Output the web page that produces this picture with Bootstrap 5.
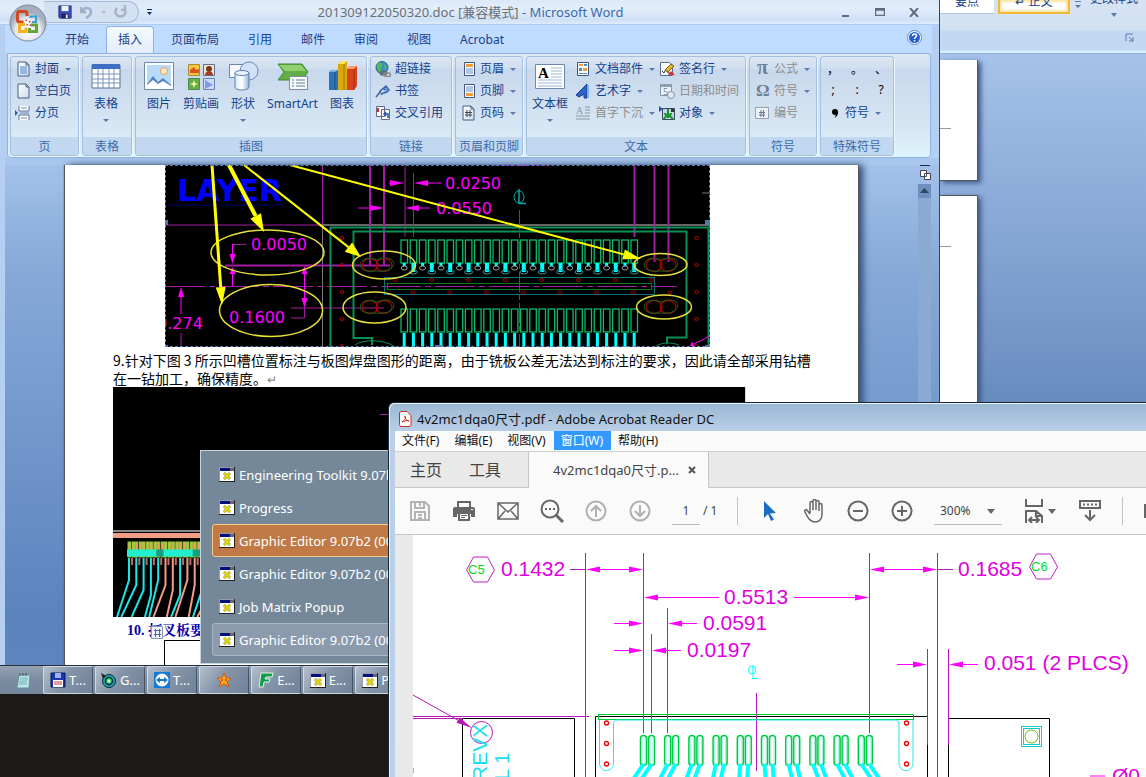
<!DOCTYPE html>
<html lang="zh-CN">
<head>
<meta charset="utf-8">
<meta name="viewport" content="width=device-width, initial-scale=1">
<title>Desktop</title>
<link href="https://cdn.jsdelivr.net/npm/bootstrap@5.3.0/dist/css/bootstrap.min.css" rel="stylesheet">
<style>
:root{--ink:#15428b;--ui:"Noto Sans","Noto Sans CJK SC",sans-serif}
html,body{height:100%}
body{font-family:var(--ui);font-size:12px;line-height:16px;color:var(--ink);background:#1b1a19;overflow:hidden}
button{font:inherit;color:inherit;background:none;border:0;padding:0;white-space:nowrap}
svg{display:block;flex:none}
.screen{position:relative;height:calc(100vh - 83px);overflow:hidden}
.pane{position:absolute;overflow:hidden}
/* rear Word window */
.rear{inset:0;background:#a8c6ee}
.rear-ribbon{margin-left:auto;width:206px;height:54px;background:linear-gradient(#d5e3f3,#d2e1f2 30px,#c1d8f0 31px,#c1d8f0 50px,#d8f0fb 51px);border-bottom:1px solid #8db2e3}
.gal{height:14px;border-bottom:1px solid #a9c4e4;background:#fff;width:54px;line-height:10px;overflow:hidden}
.gal span{display:block;margin-top:-9px}
.gal.on{border:2px solid #f0b93c;border-top:0;width:72px;box-shadow:inset 0 0 2px 2px #fbe6a4}
.restyle{margin-top:-9px}
.rear-doc{margin-left:auto;width:206px;height:calc(100% - 54px);padding-top:6px;background:linear-gradient(#a6c2ea,#6286bb 60%,#6286bb)}
.rear-page{width:38px;height:121px;background:#fff;border:1px solid #555;border-left:0;border-top:0;box-shadow:3px 2px 5px #3c5785;margin-bottom:14px;padding-top:68px}
.rear-page + .rear-page{height:600px;padding-top:50px;border-top:1px solid #555}
.rear-page i{display:block;width:11px;height:1px;background:#999}
/* front Word window */
.front{left:0;top:0;bottom:0;right:206px;background:#b4cff2;border-right:1px solid #29466f}
.cap{height:25px;background:linear-gradient(#dce8f8,#e3eefb 8px,#cfe0f6 20px,#dfebfa);border-bottom:1px solid #b0cbee}
.orb{position:absolute;left:9px;top:4px;z-index:2}
.qat{margin-left:44px;width:95px;height:22px;border-radius:0 11px 11px 0;border:1px solid #a5bddb;border-left:0;background:#d3e1f3;padding-left:14px}
.wtitle{font-size:13px;color:#6a7078;padding-right:52px}
.wtitle span{color:#3e6aaa}
.wtabs{height:28px;margin:0 7px 0 5px;background:#bfdbff;padding:1px 10px 0 46px;gap:1px}
.wtabs button{padding:0 13px;height:27px;border:1px solid transparent;border-bottom:0;border-radius:4px 4px 0 0}
.wtabs button.on{background:linear-gradient(#f5faff,#e3edf9);border-color:#8db2e3;padding:0 11px;margin:0 2px}
.rb{height:105px;margin:0 8px 0 7px;padding:2px 2px 0;gap:3px;border:1px solid #8db2e3;border-radius:0 4px 4px 4px;background:linear-gradient(#dfe9f5,#d0deef 14px,#c8d8ec 16px,#d9e8f5 80px,#dff5fd)}
.grp{height:100px;border:1px solid #a5c0de;border-radius:3px;box-shadow:1px 1px 0 #eef6fd;overflow:hidden;flex:none}
.grp>.body{height:80px;padding-top:1px}
.grp>.lab{height:19px;line-height:19px;background:#c1d8f0;color:#3e6aaa;text-align:center;font-size:12px}
.tight{padding-left:2px}
.it{height:22px;display:flex;align-items:center;gap:4px}
.it svg.ic{width:16px;height:16px}
.dim{color:#8d8d8d}
.dim svg{opacity:.6}
.dd::after{content:"";border:3px solid transparent;border-top-color:#5a7bab;border-bottom:0;margin-left:2px}
.big{display:flex;flex-direction:column;align-items:center;width:42px;padding-top:2px;height:78px}
.big svg{width:32px;height:32px;margin-bottom:4px}
.big.dd::after{margin:7px 0 0}
.puncts{color:#000;font-size:12px;display:grid;grid-template-columns:24px 24px 24px}
.puncts span{height:20px;text-align:center}
.docs{height:calc(100% - 158px);background:linear-gradient(#a3c1ea,#86a9d8 20%,#5b83bd 85%,#5f86c0);margin:0 0 0 5px;border-top:7px solid #a9c6ec}
.sheet{background:#fff;margin-left:60px;width:794px;border-right:1px solid #555;box-shadow:4px 0 7px #2f4b78,-1px 0 1px #555;height:100%;overflow:hidden;color:#000;flex:none}
.sheet p{font-family:"Noto Sans CJK SC",sans-serif;font-size:14px;line-height:18px;margin:0 0 0 48px;white-space:nowrap;font-weight:400}
.sheet .para{padding-top:4px;height:40px}
.para small{color:#888}
.pic1{margin-left:100px;width:545px;outline:1px dashed #5b7fb8;outline-offset:-1px}
.pic2{margin-left:48px}
.sheet .num{position:relative;font-family:"Liberation Serif","Noto Serif CJK SC","Noto Sans CJK SC",serif;font-weight:700;color:#00a;margin:5px 0 0 62px;height:18px}
.num svg{position:absolute;left:24px;top:4px}
.cell{border:1px solid #000;margin-left:99px;width:600px;height:60px}
.knob{position:relative;margin-bottom:-19px}
.bar{width:13px;background:#8aaad4;margin:19px 0 0;border-top:14px solid #6f8fbe}
.bar svg{margin:-10px auto 0}
/* taskbar and popup list */
.tb{position:absolute;left:0;right:0;bottom:0;height:29px;background:linear-gradient(#93a2b4,#7b8ca1 50%,#74869c);border-top:1px solid #26303c;color:#fff;padding-left:43px;gap:2px}
.tb button{width:50px;height:28px;border:1px solid #cfd8e2;border-right-color:#46566b;border-radius:2px;background:linear-gradient(125deg,#b4bfcc,#8494a8 45%,#71839a);display:flex;align-items:center;justify-content:center;gap:3px;font-size:13px;flex:none}
.tb .pad{position:absolute;left:16px;top:7px}
.pop{left:200px;bottom:30px;width:210px;height:214px;background:#748899;border:1px solid #c9d3dc;padding:7px 0 0 11px;color:#fff}
.pop button{display:flex;width:220px;height:33px;align-items:center;gap:4px;padding-left:6px;font-size:13px;border:1px solid transparent;border-radius:3px}
.pop .hot{background:#c17a45;border-color:#f3c98a}
.pop .cur{background:#8b9bad;border-color:#a9b6c4}
/* Reader window */
.rd{left:388px;top:402px;right:0;bottom:0;background:linear-gradient(#9ab7d3,#b9cfe8 28px,#b9d1ea);border:1px solid #1d2731;border-right:0;border-bottom:0;border-radius:6px 0 0 0;box-shadow:inset 1px 1px 0 #e9f2fb;padding-left:6px;color:#111}
.rd-cap{height:28px;padding:4px 0 0 4px;gap:5px;font-size:13px;color:#111}
.rd-menu{height:20px;background:#fafafa}
.rd-menu button{padding:0 8px 0 7px;height:19px;font-size:12px}
.rd-menu .on{background:#3399ff;color:#fff}
.rd-tabs{height:37px;background:#e9e9e9;border-top:1px solid #d0d0d0;border-bottom:1px solid #c6c6c6;color:#444}
.rd-tabs>button{font-size:16px;padding:0 12px 0 15px;height:35px}
.rd-tabs .doc{font-size:13px;width:181px;height:36px;margin-left:15px;background:#fafafa;border:1px solid #c6c6c6;border-width:0 1px;padding:0 8px 0 24px;display:flex;align-items:center;gap:9px}
.rd-tools{height:47px;background:#fafafa;border-bottom:1px solid #c6c6c6;padding-left:3px;color:#444}
.rd-tools button{width:44px;height:40px;display:grid;place-items:center;flex:none}
.rd-tools .wide{width:56px;display:flex;align-items:center;justify-content:center;gap:5px}
.rd-tools input,.rd-tools select{font:12px/16px var(--ui);color:#444;border:0;border-bottom:1px solid #bbb;background:none;height:27px;border-radius:0;padding:0;flex:none;appearance:none}
.rd-tools input{width:28px;margin:0 3px 0 10px;text-align:center}
.rd-tools select{width:68px;padding-left:6px}
.total{width:18px;flex:none;white-space:nowrap}
.sel{position:relative;margin:0 10px;flex:none}
.sel::after,.tri::after{content:"";border:4px solid transparent;border-top:5px solid #666;border-bottom:0}
.sel::after{position:absolute;right:7px;top:11px}
.rule{width:1px;height:28px;background:#c4c4c4;flex:none;margin:0 10px 0 16px}
.rule.last{margin:0 21px 0 10px}
.canvas{height:calc(100% - 132px);background:#fff;border-left:18px solid #e9e9e9;overflow:hidden}
.mono text{font-family:"Liberation Sans",sans-serif}
</style>
</head>
<body>
<svg width="0" height="0" class="position-absolute">
 <defs>
 <linearGradient id="gp" x1="0" y1="0" x2="1" y2="1"><stop offset="0" stop-color="#fff"/><stop offset="1" stop-color="#c9ddf2"/></linearGradient>
 <linearGradient id="gc"><stop offset="0" stop-color="#d9eafc"/><stop offset=".5" stop-color="#fff"/><stop offset="1" stop-color="#8fb2dd"/></linearGradient>
 <symbol id="page" viewBox="0 0 16 16"><path d="M3 1h8l3 3v11H3z" fill="url(#gp)" stroke="#4a5f80"/><path d="M11 1v3h3" fill="none" stroke="#4a5f80"/></symbol>
 <symbol id="xw" viewBox="0 0 16 15"><path fill="#fff" d="M0 0h16v15H0z"/><path d="M0 .5h16M.5 0v15" stroke="#99a"/><path d="M0 14.500h16M15.500 0v15" stroke="#222"/><path fill="#00107c" d="M1 1h10v3H1z"/><path fill="#667" d="M11 1h4v3h-4z"/><path d="M5 6l6 6M11 6l-6 6" stroke="#665" stroke-width="2.500"/><path d="M5 6l6 6M11 6l-6 6" stroke="#e6dc00" stroke-width="1.800"/></symbol>
 <symbol id="floppy" viewBox="0 0 16 16"><path d="M1 1h14v14H2l-1-1z" fill="#3a4fb5" stroke="#1c2a7c"/><path d="M4 1h8v6H4z" fill="#eef3fb"/><path d="M4 10h8v5H4z" fill="#1a2460"/><path d="M9 11h2v4H9z" fill="#fff"/></symbol>
 </defs>
</svg>

<main class="screen">
 <section class="pane rear" aria-label="Word">
  <div class="rear-ribbon d-flex align-items-start">
   <button class="gal me-1"><span>要点</span></button>
   <button class="gal on"><span>↵ 正文</span></button>
   <button class="border-start border-end px-1"><svg width="6" height="13"><path d="M0 1h6v1H0zM0 5h6l-3 3z" fill="#5a7bab"/></svg></button>
   <div class="ms-1"><button class="d-block restyle">更改样式</button><svg class="mx-auto" width="6" height="10"><path d="M0 6h6l-3 4z" fill="#5a7bab"/></svg>
   <svg class="ms-auto mt-3 me-1" width="9" height="9"><path d="M1 8V1h7M4 4l4 4M8 4v4H4" fill="none" stroke="#5a7bab"/></svg></div>
  </div>
  <div class="rear-doc"><div class="rear-page"><i></i></div><div class="rear-page"><i></i></div></div>
 </section>

 <section class="pane front">
  <button class="orb" aria-label="Office"><svg width="38" height="38" viewBox="0 0 38 38"><defs><radialGradient id="orb" cy=".7"><stop offset="0" stop-color="#fff"/><stop offset=".7" stop-color="#e2e6ee"/><stop offset="1" stop-color="#a3aebe"/></radialGradient></defs><circle cx="19" cy="19" r="18" fill="url(#orb)" stroke="#7b8899"/><g fill="none"><path d="M18 12V9.500a2 2 0 0 0-2-2H10.500a2 2 0 0 0-2 2V16a2 2 0 0 0 2 2h4" stroke="#d1481c" stroke-width="3"/><path d="M21.500 14v-1.500h5.500v5.500h-4" stroke="#3d9fd8" stroke-width="2.200"/><path d="M16 20.500h-5.500v7H17v-4" stroke="#f3b11b" stroke-width="3"/><path d="M20.500 24v3.500h7V21H22" stroke="#66a33a" stroke-width="3"/></g><path d="M16.500 15.500h1.500v1.500h-1.500zM20 17h1.500v1.500H20zM17.500 20H19v1.500h-1.500zM20.500 20.500H22V22h-1.500z" fill="#c0502c"/></svg></button>
  <header class="cap d-flex align-items-center">
   <div class="qat d-flex align-items-center gap-2">
    <button aria-label="保存"><svg width="14" height="14"><use href="#floppy"/></svg></button>
    <button class="d-flex align-items-center gap-2" aria-label="撤消"><svg width="13" height="14"><path d="M1 2v5h5M2 6c3-4 9-4 9 1 0 3-3 5-5 6" fill="none" stroke="#9fb0cc" stroke-width="2.500"/></svg><svg width="5" height="3"><path d="M0 0h5l-2 3z" fill="#b3bccb"/></svg></button>
    <button aria-label="恢复"><svg width="13" height="14"><path d="M3 3a5 5 0 1 0 7 0M11 0v5H7" fill="none" stroke="#a8b4c8" stroke-width="2.500"/></svg></button>
   </div>
   <svg class="ms-2" width="5" height="7"><path d="M0 0h5v1H0zM0 3h5L2.500 6z" fill="#15305f"/></svg>
   <div class="wtitle flex-grow-1 text-center">201309122050320.doc [兼容模式] <span>- Microsoft Word</span></div>
   <div class="d-flex gap-4 align-items-center me-3 pe-1">
    <button aria-label="最小化"><svg width="10" height="10"><path d="M1 8h7v2H1z" fill="#5e6d82"/></svg></button>
    <button aria-label="最大化"><svg width="10" height="8"><path d="M.5.5h9v7h-9zM0 2h10" fill="none" stroke="#5e6d82" stroke-width="1.500"/></svg></button>
    <button aria-label="关闭"><svg width="10" height="9"><path d="M1 0l8 9M9 0L1 9" stroke="#5e6d82" stroke-width="2"/></svg></button>
   </div>
  </header>
  <nav class="wtabs d-flex">
   <button>开始</button><button class="on">插入</button><button>页面布局</button><button>引用</button><button>邮件</button><button>审阅</button><button>视图</button><button>Acrobat</button>
   <svg class="ms-auto mt-1" width="15" height="15"><circle cx="7.500" cy="7.500" r="7" fill="#fff" stroke="#5a82c4"/><circle cx="7.500" cy="7.500" r="5.500" fill="#2360cf"/><path d="M5.500 6c0-3 4-2.500 4-.5S7.500 7 7.500 9M7.500 10v1.500" fill="none" stroke="#fff" stroke-width="1.500"/></svg>
  </nav>
  <div class="rb d-flex">
   <div class="grp" style="width:69px"><div class="body ps-1">
    <button class="it dd"><svg class="ic"><use href="#page"/><path d="M5 6h7M5 8h7M5 10h7M5 12h7" stroke="#4d86c6"/></svg>封面</button>
    <button class="it"><svg class="ic"><use href="#page"/></svg>空白页</button>
    <button class="it"><svg class="ic"><path d="M4 1v5h10V1M4 15v-5h10v5" fill="#fff" stroke="#56708f"/><path d="M6 3h6M6 13h6M5 8h9" stroke="#6689b5"/><path d="M0 5l3 3-3 3z" fill="#2c5ea8"/></svg>分页</button></div><div class="lab">页</div></div>
   <div class="grp" style="width:50px"><div class="body tight"><button class="big dd"><svg viewBox="0 0 32 32"><path fill="#fff" stroke="#57739c" d="M2 5h28v23H2z"/><path fill="#3f6fc4" d="M2 4h28v5H2z"/><path d="M2 14h28M2 19h28M2 23h28M8 9v19M13 9v19M19 9v19M24 9v19" stroke="#7b95b8"/></svg>表格</button></div><div class="lab">表格</div></div>
   <div class="grp" style="width:232px"><div class="body d-flex tight">
    <button class="big"><svg viewBox="0 0 32 32"><path d="M1.500 2.500h29v27h-29z" fill="#fff" stroke="#6d88ae"/><path d="M4 5h24v22H4z" fill="#b8dcf8"/><circle cx="21" cy="11" r="3.500" fill="#fde9c8" stroke="#f19a4a"/><path d="M4 24l6-8 5 6 5-4 8 7v2H4z" fill="#5585c0"/><path d="M4 25l6-5 5 4 5-3 8 5v1H4z" fill="#fff"/></svg>图片</button>
    <button class="big"><svg viewBox="0 0 32 32"><path d="M3.500 4.500h11v11h-11z" fill="#f8c838" stroke="#a98a3a"/><path d="M5 10l4-3 2 3 3-1v4H5z" fill="#d9541e"/><path d="M18.500 4.500h11v11h-11z" fill="#ece5d8" stroke="#63708a"/><circle cx="24" cy="9" r="3" fill="#7a3b18"/><path d="M20 15c0-5 8-5 8 0z" fill="#b03822"/><path d="M3.500 18.500h11v11h-11z" fill="#66b04a" stroke="#4d8a4a"/><path d="M9 20l1 3 3 1-3 1-1 3-1-3-3-1 3-1z" fill="#fff6a0"/><path d="M18.500 18.500h11v11h-11z" fill="#cdd9f8" stroke="#6a83b8"/><path d="M20 20l8 5-8 4z" fill="#7e9be4"/></svg>剪贴画</button>
    <button class="big dd"><svg viewBox="0 0 32 32"><path d="M2.500 4.500h14v13h-14z" fill="#f5f9fe" stroke="#6a87b2"/><circle cx="22" cy="11" r="9" fill="#cfe2f7" stroke="#6a87b2"/><path d="M8 13v14c0 4 14 4 14 0V13z" fill="url(#gc)" stroke="#5f80b0"/><ellipse cx="15" cy="13" rx="7" ry="2.500" fill="#e9f3fe" stroke="#5f80b0"/></svg>形状</button>
    <button class="big" style="width:57px"><svg viewBox="0 0 32 32"><path d="M1 4h24l6 8-6 8H1l6-8z" fill="#62ad45" stroke="#3f8636"/><path d="M2 5h22l5 6H8z" fill="#92cf70"/><path d="M12.500 16.500h18v13h-18z" fill="#f7fafd" stroke="#7b8ca4"/><path d="M15 20h2M15 23h2M15 26h2M19 20h9M19 23h9M19 26h9" stroke="#65788f"/></svg>SmartArt</button>
    <button class="big"><svg viewBox="0 0 32 32"><path d="M3 12l3-2h6v20H3z" fill="#2c72b8"/><path d="M3 12l3-2h6l-3 2z" fill="#76b3e6"/><path d="M12 4l3-3h6v29h-9z" fill="#dba90c"/><path d="M12 4l3-3h6l-3 3z" fill="#ffe65c"/><path d="M21 9l3-3h7v20l-3 4h-7z" fill="#d9421c"/><path d="M21 9l3-3h7l-3 3z" fill="#ff9a70"/><path d="M9 12v18M18 4v26M28 9v21" stroke="#000" stroke-opacity=".3"/></svg>图表</button></div><div class="lab">插图</div></div>
   <div class="grp" style="width:82px"><div class="body ps-1">
    <button class="it"><svg class="ic"><circle cx="7" cy="6.500" r="6" fill="#3b8dcc" stroke="#2c6189"/><path d="M3 2c5-1 5 2 3 5s3 3 0 5c-3-1-6-6-3-10zM9 3l3 3-2 3z" fill="#55b858"/><rect x="5.500" y="10.500" width="6" height="3.500" rx="1.800" fill="none" stroke="#666" stroke-width="1.500"/><rect x="9.500" y="12" width="6" height="3.500" rx="1.800" fill="none" stroke="#888" stroke-width="1.500"/></svg>超链接</button>
    <button class="it"><svg class="ic"><path d="M1 14l5-6M4 11c1-5 4-6 7-4M6 12c2-4 4 0 8-5l-3-4-6 5" fill="#8fb1e2" stroke="#3d64a8" stroke-width="1.500"/></svg>书签</button>
    <button class="it"><svg class="ic"><path d="M1.500 1.500h8v10h-8zM6.500 4.500h8v10h-8z" fill="#fff" stroke="#5a6d8c"/><path d="M3 3v4" stroke="#c33" stroke-width="2"/><path d="M13 13V9H9m2-2L9 9l2 2" fill="none" stroke="#2456b0" stroke-width="1.500"/></svg>交叉引用</button></div><div class="lab">链接</div></div>
   <div class="grp" style="width:68px"><div class="body ps-1">
    <button class="it dd"><svg class="ic"><path d="M4.500 1.500h10v13h-10z" fill="#fff" stroke="#3c5680"/><path fill="#f19b38" d="M6 3h7v3H6z"/><path d="M6 8h7M6 10h7M6 12h7" stroke="#6a8cc0"/></svg>页眉</button>
    <button class="it dd"><svg class="ic"><path d="M4.500 1.500h10v13h-10z" fill="#fff" stroke="#3c5680"/><path fill="#f19b38" d="M6 10h7v3H6z"/><path d="M6 4h7M6 6h7M6 8h7" stroke="#6a8cc0"/></svg>页脚</button>
    <button class="it dd"><svg class="ic"><use href="#page"/><path d="M7 5v7M10 5v7M5 7.500h7M5 10h7" stroke="#445" /></svg>页码</button></div><div class="lab">页眉和页脚</div></div>
   <div class="grp" style="width:220px"><div class="body d-flex tight">
    <button class="big dd"><svg viewBox="0 0 32 32"><path d="M1.500 4.500h29v24h-29z" fill="#fff" stroke="#6d88ae"/><path d="M17 8h11M17 11h11M17 14h11M17 17h11M4 20h24M4 23h24M4 26h24" stroke="#9cb7dc"/><text x="4" y="18" font-size="15" font-weight="700" font-family="Liberation Serif,serif" fill="#000">A</text></svg>文本框</button>
    <div class="ps-1">
    <button class="it dd"><svg class="ic"><path d="M2.500 1.500h11v13h-11z" fill="#fff" stroke="#3c5680"/><path fill="#f19b38" d="M4 3h4v2H4zM8 7h4v3H8z"/><path fill="#4b85cc" d="M9 3h3v2H9zM4 7h3v3H4zM4 12h8v1H4z"/></svg>文档部件</button>
    <button class="it dd"><svg class="ic"><path d="M1 12L12 1v14H9v-4l-5 3z" fill="#2b65c8" stroke="#163f8c"/><path d="M12 1l2 1v13h-2" fill="#7fb0ee"/></svg>艺术字</button>
    <button class="it dd dim"><svg class="ic"><text x="1" y="9" font-size="10" font-family="Liberation Serif,serif" fill="#567">A</text><path d="M10 2h5M10 5h5M10 8h5M1 11h14M1 14h14" stroke="#567"/></svg>首字下沉</button></div>
    <div class="ps-1">
    <button class="it dd"><svg class="ic"><path d="M1.500 1.500h9l3 3v10h-12z" fill="#fff" stroke="#5a6d8c"/><path d="M3 10l2 2 2-4 2 4h5" fill="none" stroke="#334"/><path d="M6 9l6-6 3 2-6 6z" fill="#e9b62c" stroke="#7c5a18"/><path d="M12 10l4 4h-7z" fill="#d03a2a"/></svg>签名行</button>
    <button class="it dim"><svg class="ic"><path d="M1.500 1.500h11v11h-11z" fill="#fff" stroke="#567"/><path fill="#678" d="M1 1h12v3H1z"/><text x="4" y="12" font-size="9" fill="#456">5</text><circle cx="12" cy="12" r="3.500" fill="#eef" stroke="#567"/></svg>日期和时间</button>
    <button class="it dd"><svg class="ic"><path fill="#c9d4e2" stroke="#3a4660" d="M3.500 3.500h12v11h-12z"/><path d="M9 4v9M6 8c0 3 6 3 6 0M5 14c2-4 6-4 9 0" stroke="#18942c" stroke-width="2" fill="none"/><path d="M0 1l4 3-4 3z" fill="#2450b8"/><path fill="#333" d="M12 4h3v3h-3z"/></svg>对象</button></div>
   </div><div class="lab">文本</div></div>
   <div class="grp" style="width:68px"><div class="body ps-1 dim">
    <button class="it dd"><svg class="ic"><text x="3" y="13" font-size="20" font-weight="700" fill="#345" font-family="Liberation Serif,serif">π</text></svg>公式</button>
    <button class="it dd"><svg class="ic"><text x="2" y="13" font-size="17" font-weight="700" fill="#345" font-family="Liberation Serif,serif">Ω</text></svg>符号</button>
    <button class="it"><svg class="ic"><path d="M1.500 2.500h13v11h-13z" fill="#fff" stroke="#678"/><path d="M7 5v7M9.500 5v7M5 7.500h6M5 10h6" stroke="#234"/></svg>编号</button></div><div class="lab">符号</div></div>
   <div class="grp" style="width:74px"><div class="body">
    <div class="puncts pt-1"><span>，</span><span>。</span><span>、</span><span>;</span><span>:</span><span>?</span></div>
    <button class="it dd ps-1"><svg class="ic"><circle cx="10" cy="7" r="3" fill="#000"/><path d="M13 7c0 3-1 5-4 6 2-2 2-3 1-4z"/></svg>符号</button></div><div class="lab">特殊符号</div></div>
  </div>
  <div class="docs d-flex">
   <article class="sheet">
    <svg id="board" class="pic1" height="182" viewBox="165 165 545 182"></svg>
    <p class="para">9.针对下图 3 所示凹槽位置标注与板图焊盘图形的距离，由于铣板公差无法达到标注的要求，因此请全部采用钻槽<br>在一钻加工，确保精度。<small>↵</small></p>
    <svg id="traces" class="pic2" width="633" height="230" viewBox="113 387 633 230"></svg>
    <p class="num">10. 打叉板要求<svg width="12" height="13"><path d="M.5.5h11v12H.5z" fill="#eef3fb" stroke="#8a9ab5"/><path d="M3 4.500h7M3 8.500h7M4.500 3v8M8.500 3v8" stroke="#4a68a8"/></svg></p>
    <div class="cell"></div>
   </article>
   <div class="ms-auto me-2 d-flex flex-column align-items-center"><svg class="knob" width="12" height="19"><path d="M1 0h10v1H1z" fill="#1c2b45"/><path d="M1.500 5.500h6v6h-6zM5.500 8.500h6v6h-6z" fill="#fff" stroke="#445"/></svg><div class="bar flex-grow-1"><svg width="9" height="5"><path d="M4.500 0L9 5H0z" fill="#2f4668"/></svg></div></div>
  </div>
 </section>

 <nav class="tb d-flex" aria-label="Taskbar">
  <svg class="pad" width="16" height="16"><path d="M3 2h11l-1 13H1z" fill="#bfe6ea" stroke="#5b97a4"/><path d="M4 5h8M4 7h8M3 9h8M3 11h8" stroke="#6fb3bd"/><path d="M4 0v3M7 0v3M10 0v3" stroke="#555"/></svg>
  <button><svg width="16" height="16"><path d="M1 1h14v14H1z" fill="#1736b0" stroke="#06185c"/><path d="M5 1h6v5H5z" fill="#9fb3f0"/><path d="M3 8h10v7H3z" fill="#fff"/><path d="M4 10h8M4 12h8" stroke="#c33"/></svg>T...</button>
  <button><svg width="17" height="16"><circle cx="9" cy="9" r="6.500" fill="#18a89c" stroke="#124"/><circle cx="9" cy="9" r="3.500" fill="#2ee060" stroke="#025" stroke-width="1.500"/><circle cx="9" cy="9" r="1.300" fill="#fff"/><path d="M1 1l5 3-3 3z" fill="#222"/></svg>G...</button>
  <button><svg width="16" height="16"><path fill="#1478d4" d="M0 0h16v16H0z"/><circle cx="8" cy="8" r="6.500" fill="#fff"/><path d="M2 8l4-3v2h4V5l4 3-4 3V9H6v2z" fill="#1478d4"/></svg>T...</button>
  <button aria-label="Star"><svg width="16" height="16"><path d="M8 1l2 5 5 0-4 4 2 5-5-3-5 3 2-5-4-4 5 0z" fill="#ffa51e" stroke="#d9541a"/><path d="M6 7v2M10 7v2" stroke="#722"/></svg></button>
  <button><svg width="17" height="16"><path d="M4 1h12l-1 4H9l-1 2h5l-1 3H7l-1 5H2z" fill="#15994a" stroke="#e2f5e8"/></svg>E...</button>
  <button><svg width="16" height="15"><use href="#xw"/></svg>E...</button>
  <button><svg width="16" height="15"><use href="#xw"/></svg>P...</button>
 </nav>

 <div class="pane pop">
  <button><svg width="16" height="15"><use href="#xw"/></svg>Engineering Toolkit 9.07b2</button>
  <button><svg width="16" height="15"><use href="#xw"/></svg>Progress</button>
  <button class="hot"><svg width="16" height="15"><use href="#xw"/></svg>Graphic Editor 9.07b2 (00</button>
  <button><svg width="16" height="15"><use href="#xw"/></svg>Graphic Editor 9.07b2 (00</button>
  <button><svg width="16" height="15"><use href="#xw"/></svg>Job Matrix Popup</button>
  <button class="cur"><svg width="16" height="15"><use href="#xw"/></svg>Graphic Editor 9.07b2 (00</button>
 </div>
</main>

<section class="pane rd">
 <header class="rd-cap d-flex align-items-center"><svg width="13" height="16"><path d="M2 .5h6l4 4v9a2 2 0 0 1-2 2H2a2 2 0 0 1-1.500-2V2A2 2 0 0 1 2 .5z" fill="#fff" stroke="#d42a26"/><path d="M3 11c4-2 4-6 3-6s0 4 4 5c-2-1-5 0-7 1z" fill="none" stroke="#d42a26"/></svg>4v2mc1dqa0尺寸.pdf - Adobe Acrobat Reader DC</header>
 <nav class="rd-menu d-flex"><button>文件(F)</button><button>编辑(E)</button><button>视图(V)</button><button class="on">窗口(W)</button><button>帮助(H)</button></nav>
 <nav class="rd-tabs d-flex"><button>主页</button><button>工具</button><button class="doc">4v2mc1dqa0尺寸.p...<svg width="8" height="8" aria-label="关闭"><path d="M1 1l6 6M7 1L1 7" stroke="#555" stroke-width="2"/></svg></button></nav>
 <div class="rd-tools d-flex align-items-center">
  <button aria-label="保存"><svg width="20" height="20" fill="none" stroke="#b3b3b3" stroke-width="2"><path d="M1 1h14l4 4v14H1zM5 19v-8h10v8M5 1v6h9V1M8 14h4M8 17h4M10 2v3"/></svg></button>
  <button aria-label="打印"><svg width="22" height="20" fill="#666"><path d="M4 0h14v6H4zM2 6h18a2 2 0 0 1 2 2v8h-4v-3H4v3H0V8a2 2 0 0 1 2-2zM5 13h12v7H5z"/><path fill="#fff" d="M6 2h10v4H6zM7 13h8v5H7zM18 8h2v1h-2z"/><path d="M8 14h6v1H8zM8 16h4v1H8z"/></svg></button>
  <button aria-label="邮件"><svg width="22" height="18" fill="none" stroke="#666" stroke-width="1.500"><path d="M1 1h20v16H1zM1 1l10 9L21 1M1 17l7-8M21 17l-7-8"/></svg></button>
  <button aria-label="查找"><svg width="24" height="24" fill="none" stroke="#666" stroke-width="2"><circle cx="10" cy="10" r="8.500"/><path d="M16 16l7 7" stroke-width="3"/><path d="M5 10h2M9 10h2M13 10h2" /></svg></button>
  <button aria-label="上一页"><svg width="22" height="22" fill="none" stroke="#b0b0b0" stroke-width="2"><circle cx="11" cy="11" r="9.500"/><path d="M11 17V6M6 11l5-5 5 5"/></svg></button>
  <button aria-label="下一页"><svg width="22" height="22" fill="none" stroke="#b0b0b0" stroke-width="2"><circle cx="11" cy="11" r="9.500"/><path d="M11 5v11M6 11l5 5 5-5"/></svg></button>
  <input aria-label="页码" value="1"><span class="total">/ 1</span>
  <span class="rule"></span>
  <button aria-label="选择"><svg width="14" height="20"><path d="M1 0l12 12-6 .5 4 6-3 1.500-3-7-4 4z" fill="#1b6ec2"/></svg></button>
  <button aria-label="抓手"><svg width="22" height="24" fill="none" stroke="#666" stroke-width="1.500"><path d="M7 14V4c0-2 3-2 3 0v7V2c0-2 3-2 3 0v9V3c0-2 3-2 3 0v9V6c0-2 3-2 3 0v9c0 5-3 8-7 8-5 0-7-4-10-10-1-2 1-3 2-2l3 4"/></svg></button>
  <button aria-label="缩小"><svg width="22" height="22" fill="none" stroke="#666" stroke-width="2"><circle cx="11" cy="11" r="9.500"/><path d="M6 11h10"/></svg></button>
  <button aria-label="放大"><svg width="22" height="22" fill="none" stroke="#666" stroke-width="2"><circle cx="11" cy="11" r="9.500"/><path d="M6 11h10M11 6v10"/></svg></button>
  <span class="sel"><select aria-label="缩放"><option>300%</option></select></span>
  <button class="wide tri" aria-label="适合宽度"><svg width="18" height="24" fill="none" stroke="#666" stroke-width="2"><path d="M1 0v7h16V0M1 24V12h10l6 5v7M11 12v5h6M4 21h10M7 18l-3 3 3 3M11 18l3 3-3 3"/></svg></button>
  <button aria-label="工具栏"><svg width="22" height="22" fill="none" stroke="#666" stroke-width="2"><path d="M1 1h20v7H1zM4 4.500h2M8 4.500h2M12 4.500h2M16 4.500h2M11 10v10M6 15l5 5 5-5"/></svg></button>
  <span class="rule last"></span><svg width="8" height="14"><path d="M1 1h6v12H1z" fill="none" stroke="#666" stroke-width="2"/></svg>
 </div>
 <div class="canvas"><svg id="pdf" class="mono" width="733" height="242" viewBox="413 535 733 242"></svg></div>
</section>

<script src="https://cdn.jsdelivr.net/npm/bootstrap@5.3.0/dist/js/bootstrap.bundle.min.js"></script>
<script>
// Small helpers that return SVG markup for the CAD drawings.
const L=(x1,y1,x2,y2,c,w=1,x='')=>`<path d="M${x1} ${y1}L${x2} ${y2}" stroke="${c}" stroke-width="${w}" fill="none" ${x}/>`;
const R=(x,y,w,h,c,sw=1,f='none',rx=0)=>`<rect x="${x}" y="${y}" width="${w}" height="${h}" stroke="${c}" stroke-width="${sw}" fill="${f}" rx="${rx}"/>`;
const E=(x,y,rx,ry,c,w=1)=>`<ellipse cx="${x}" cy="${y}" rx="${rx}" ry="${ry}" stroke="${c}" stroke-width="${w}" fill="none"/>`;
const T=(x,y,s,t,c,x2='')=>`<text x="${x}" y="${y}" font-size="${s}" fill="${c}" ${x2}>${t}</text>`;
// Line that ends in a filled arrow head at (x2,y2).
function A(x1,y1,x2,y2,c,w=1,len=14,half=3){
  const d=Math.hypot(x2-x1,y2-y1),u=(x2-x1)/d,v=(y2-y1)/d,bx=x2-u*len,by=y2-v*len;
  return L(x1,y1,bx,by,c,w)+`<path d="M${x2} ${y2}L${bx-v*half} ${by+u*half}L${bx+v*half} ${by-u*half}z" fill="${c}"/>`;
}
// Board picture
(function(){
  const m='#a21ca2',M='#f0f',g='#0c8f55',y='#e6e03a',Y='#ff0';let s=R(165,165,545,182,'none',0,'#000');
  const D='font-family="DejaVu Sans"';
  s+=T(282,201,30,'LAYER','#00f',D+' font-weight="700" text-anchor="end"')+L(165,205,283,205,'#00006a');
  s+=L(322.5,165,322.5,347,m)+L(322.5,225,322.5,347,'#777')+L(322.5,225,710,225,'#666',2)+L(165,225,322,225,m);
  s+=L(165,286.5,677,286.5,m,1,'stroke-dasharray="40 4 6 4"')+L(225,265.5,390,265.5,m,2)+L(291,308,384,308,m);
  [370,384].forEach(x=>s+=L(x,165,x,265,m,2));s+=L(405,165,405,237,m)+L(413.5,173,413.5,237,m);
  s+=L(634.5,165,634.5,237,m,2)+L(654.5,165,654.5,262,m,2)+L(668.5,165,668.5,262,m,2)+L(519.5,210,519.5,347,m,1,'stroke-dasharray="20 3 5 3"');
  s+=`<path d="M330.500 347V227.500H708.500V347M372 345v-7h-18.500V231.500H686.500V337.500H667v6" fill="none" stroke="${g}" stroke-width="2"/><path d="M355 345c8-6 30-6 40 2M655 347c6-5 16-5 24-2" fill="none" stroke="${g}"/>`;
  for(let i=0;i<26;i++){const x=401+i*9.2;
    s+=R(x,240,6.5,23,'#10b868',1.3)+R(x,309,6.5,23,'#10b868',1.3)+L(x+3.2,333,x+3.2,347,'#0ff',3);
    s+=i%2?L(x+3.2,263,x+3.2,272,'#0ff',4)+E(x+3.2,272,4,2,'#2a9c9c'):L(x+3.2,263,x+3.2,266,'#0ff',3)+E(x+3.2,268,3,2,'#999');}
  s+=R(384.5,277.5,270,17,'#0d7474')+R(387.5,283.5,264,6,'#0a7a2a');
  for(let x=395;x<655;x+=36.7)s+=E(x,280,2,1.5,'#a00')+E(x+18,292.500,2,1.5,'#a00');
  [238,265,292,319,346].forEach(v=>s+=E(342,v,1.800,1.500,'#b00')+E(696.500,v,1.800,1.500,'#b00'));
  [[370,265],[370,307],[654,265],[654,307]].forEach(([x,v])=>s+=E(x,v,8,6.500,'#a00',1.300)+E(x+14,v,8,6.500,'#a00',1.300)+`<path d="M${x+7} ${v-5}c-18-8-26 14-1 11c25 3 22-20 1-11" fill="none" stroke="#0a6a20"/>`);
  s+=T(445,189,16,'0.0250',M,D)+T(436,214,16,'0.0550',M,D)+T(492,166,16,'0.0200',M,D)+T(251,250,16,'0.0050',M,D)+T(229,323,16,'0.1600',M,D)+T(157,329,16,'0.274',M,D);
  s+=A(389,183,404,183,M)+A(441,183,414,183,M)+A(358,208,384,208,M)+A(430,208,405,208,M);
  s+=L(246,244.500,232.500,244.500,m)+A(232.500,244,232.500,264,M,1,10)+A(232.500,286,232.500,267,M,1,7)+A(304.500,285,304.500,266,M,1,8)+A(304.500,285,304.500,308,M,1,10)+L(304.500,308,304.500,318,m)+L(304,318,291,318,m)+A(181,314,181,287,M,1,10)+L(181,333,181,347,m);
  s+=E(519,197,5,6,'#0aa')+L(519,189,519,204,'#0aa',1.500)+L(519,203.500,526,203.500,'#0aa',1.500);
  s+=E(267.500,252.500,56.500,22.500,y,1.500)+E(271,310.500,51.500,26,y,1.500)+E(384,265,31.500,14,y,1.500)+E(374.500,307.500,31.500,15.500,y,1.500)+E(660.500,264.500,26.500,11,y,1.500)+E(664,307,27.500,12,y,1.500);
  s+=A(212,165,222,305,Y,3,18,5)+A(229,165,264,232,Y,4,18,6)+A(244,165,361,257,Y,2,16,6)+A(290,165,641,259,Y,2,18,5);
  [[165,220],[708,220],[165,345],[708,345],[438,345]].forEach(([x,v])=>s+=R(x-3,v,6,5,'none',0,'#5078b0'));
  s+=L(702,193,710,193,'#777')+A(710,336,690,346,M,1,4);
  document.getElementById('board').innerHTML=s;
})();
// Trace picture
(function(){
  let s=R(113,387,632,230,'none',0,'#000')+L(745.500,387,745.500,617,'#bdecc8')+L(380,414.500,400,414.500,'#a1a');
  s+=L(113,531,745,531,'#888',2)+L(113,535.500,745,535.500,'#f29c86',5);
  for(let i=0;i<15;i++){const x=128+i*7.300,c=i>3&&i%3!=1?'#f29c86':'#1fe6e6';
    s+=R(x,542,2.5,15,'#8ad23c',1,'#f0a050')+R(x+4,542,2.5,15,'#8ad23c',1,'#f0a050')+L(x-1,553,x+7,553,i%5==4?'#12a080':'#1ff0d0',7)+L(x+4,558,x+4,565,'#c06868',2);
    s+=`<path d="M${x+1} 558V${580+i%4*5}L${x-1-(i<2?10:4)-i%3*3} 617" fill="none" stroke="${c}" stroke-width="2"/>`;}
  document.getElementById('traces').innerHTML=s;
})();
// PDF page
(function(){
  const m='#b818b8',M='#f0f',t='#e000e0',g='#0d2',c='#0ff';let s='';
  s+='<path d="M462.500 777V718.500H574.500V777M595.500 777V716.500H927.500V777M948.500 777V718.500H1049.500V777" fill="none" stroke="#000"/>';
  [[585.500,553,777],[643.500,553,733],[667.500,608,733],[651.500,634,733],[869.500,553,733],[937.500,553,777],[927.500,649,745],[948.500,649,745],[756.500,693,771]].forEach(([x,a,b])=>s+=L(x,a,x,b,m));
  s+=T(501,576,21,'0.1432',t)+T(724,604,21,'0.5513',t)+T(703,630,21,'0.0591',t)+T(687,657,21,'0.0197',t)+T(958,576,21,'0.1685',t)+T(984,670,21,'0.051 (2 PLCS)',t)+T(1112,783,21,'Ø0.040',t);
  s+=L(570,569.500,586,569.500,m)+A(614,569.500,586,569.500,M)+A(614,569.500,643,569.500,M)+A(719,597.500,644,597.500,M)+A(794,597.500,869,597.500,M)+A(614,623.500,643,623.500,M)+A(697,623.500,668,623.500,M)+A(614,650.500,643,650.500,M)+A(681,650.500,652,650.500,M);
  s+=A(900,569.500,870,569.500,M)+A(900,569.500,937,569.500,M)+L(937,569.500,953,569.500,m)+A(897,664.500,927,664.500,M)+A(978,664.500,949,664.500,M)+L(1090,776,1105,776,M);
  const hex=(x,y)=>`<path d="M${x-14} ${y}l7-13h14l7 13-7 12h-14z" fill="none" stroke="#c020c0"/>`;
  s+=hex(480.500,570)+T(468,574,13,'C5',g)+hex(1043.500,567)+T(1031,571,13,'C6',g);
  s+=L(413,716.500,589,716.500,m)+L(413,718.500,462,718.500,m)+A(413,695,472,728,m,1,16,3)+L(413,768,413,773,M);
  s+=`<circle cx="481.500" cy="732.500" r="11" fill="none" stroke="${m}"/>`+T(0,0,21,'REVX','#18e0ee','transform="translate(487 781) rotate(-90)"')+T(0,0,20,'L 1','#18e0ee','transform="translate(509 780) rotate(-90)"');
  s+=R(598.500,714.500,315,5,'#0c3')+`<path d="M599.500 720v43c0 10 14 10 14 0v-38c0-4 1-5 4-5H895c3 0 4 2 4 5v38c0 10 14 10 14 0v-43" fill="none" stroke="#1fe6f0"/>`;
  [723,743.500,764].forEach(v=>[606.500,906.500].forEach(x=>s+=E(x,v,2,2,'#e00',1.300)));
  for(let i=0;i<10;i++)for(let k=0;k<2;k++){const x=640.500+i*24.200+k*8;
    s+=R(x,735.500,6,30,'#0c4',1.500,'#fff',3)+R(x+1.500,738,3,26,'#8ef0e0',.7)+L(x+3,764,x+3+(i-4.500)*2.400,780,c,4);}
  s+=E(752,670,3.500,4,c)+L(753,665,753,679,c)+L(752,678.500,758,678.500,c);
  s+=R(1021.500,726.500,20,20,'#1cc')+R(1023.500,728.500,16,16,'#1cc')+`<circle cx="1031.500" cy="736.500" r="6.500" fill="none" stroke="#7b2"/>`;
  document.getElementById('pdf').innerHTML=s;
})();
</script>
</body>
</html>
